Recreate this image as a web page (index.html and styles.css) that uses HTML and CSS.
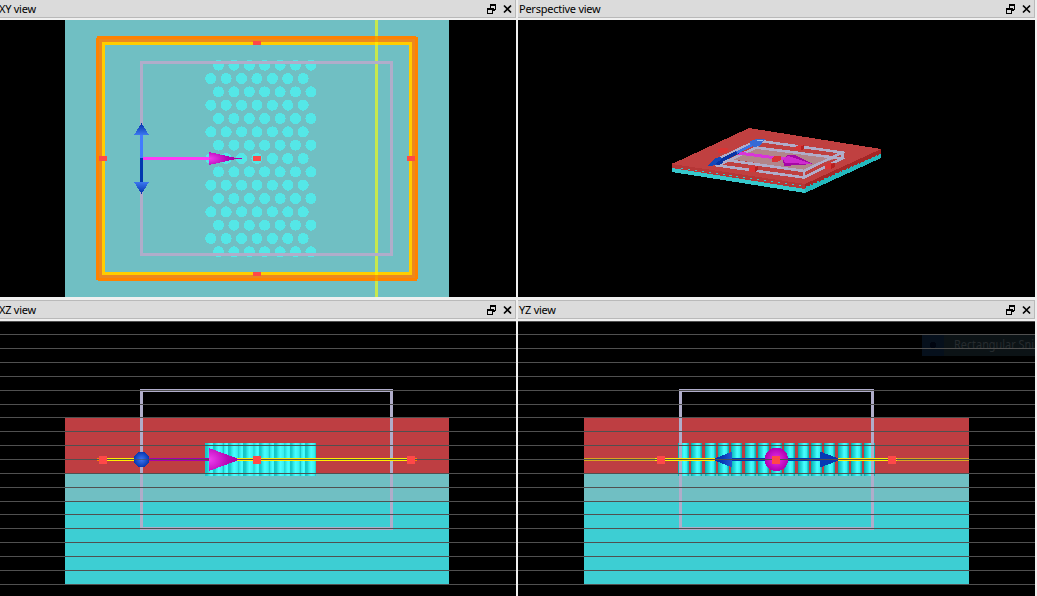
FILE: index.html
```
<!DOCTYPE html>
<html lang="en">
<head>
<meta charset="utf-8">
<title>Layout views</title>
<link rel="stylesheet" href="styles.css">
</head>
<body>
<svg class="defs" width="0" height="0">
  <defs>
    <symbol id="controls" viewBox="0 0 26 10">
      <path d="M3 0h6v6h-1v1H6v3H0V4h3zM4 2v2h3v1h1V2zM1 6v3h4V6z" fill="#000" fill-rule="evenodd"/>
      <path d="M17 1.500l7 7M24 1.500l-7 7" stroke="#000" stroke-width="1.700"/>
    </symbol>
    <linearGradient id="tube"><stop offset="0" stop-color="#0aa"/><stop offset=".14" stop-color="#16c4c4"/><stop offset=".35" stop-color="#28e0e0"/><stop offset=".55" stop-color="#48ffff"/><stop offset=".78" stop-color="#38f0f0"/><stop offset=".9" stop-color="#18c0c0"/><stop offset="1" stop-color="#0aa"/></linearGradient>
    <linearGradient id="softtube"><stop offset="0" stop-color="#14c4c4"/><stop offset=".2" stop-color="#18cccc"/><stop offset=".35" stop-color="#30e8e8"/><stop offset=".55" stop-color="#48ffff"/><stop offset=".85" stop-color="#38f0f0"/><stop offset="1" stop-color="#18c4c4"/></linearGradient>
    <radialGradient id="ball"><stop offset="0" stop-color="#3c74f4"/><stop offset="1" stop-color="#0638b0"/></radialGradient>
    <radialGradient id="pinkball"><stop offset="0" stop-color="#e830e8"/><stop offset="1" stop-color="#b000b0"/></radialGradient>
    <radialGradient id="cone" cx="0" cy=".5" r="1"><stop offset="0" stop-color="#f040f0"/><stop offset=".6" stop-color="#b808b8"/><stop offset="1" stop-color="#a000a0"/></radialGradient>
    <linearGradient id="blueup" x2="0" y2="1"><stop offset="0" stop-color="#0030a8"/><stop offset="1" stop-color="#3c78f0"/></linearGradient>
    <linearGradient id="bluedown" x2="0" y2="1"><stop offset="0" stop-color="#3c78f0"/><stop offset="1" stop-color="#0030a8"/></linearGradient>
    <linearGradient id="blueleft"><stop offset="0" stop-color="#0030a8"/><stop offset=".5" stop-color="#0838b4"/><stop offset="1" stop-color="#2458d0"/></linearGradient>
  </defs>
</svg>
<main class="views">
  <section class="view">
    <header class="bar"><h2 class="name">XY view</h2><svg class="controls"><use href="#controls"/></svg></header>
    <svg class="canvas" viewBox="0 20 516 277" shape-rendering="crispEdges">
      <path fill="#70bfc3" d="M65 20h384v277H65z"/>
      <g id="dots" fill="#54e7e7"></g>
      <rect x="141.5" y="62.5" width="250" height="192" fill="none" stroke="#b0adca" stroke-width="3"/>
      <rect x="100.5" y="40.5" width="313" height="236" fill="none" stroke="#eb8820" stroke-width="6"/>
      <rect x="97.5" y="37.5" width="319" height="242" fill="none" stroke="#ff8200" stroke-width="3"/>
      <rect x="103.5" y="43.5" width="307" height="230" fill="none" stroke="#ffcd00" stroke-width="3"/>
      <path fill="#70bfc3" d="M96 36h1v2h-1zM416 36h2v1h-2zM96 280h2v1h-2zM417 279h1v2h-1z"/>
      <path fill="#c6e84d" d="M375 20h3v277h-3z"/>
      <path fill="#ffe500" d="M375 42h3v3h-3zM375 272h3v3h-3z"/>
      <path fill="#f59b00" d="M375 36h3v6h-3zM375 275h3v6h-3z"/>
      <path fill="#b0adca" d="M375 253h3v3h-3zM375 61h3v3h-3z"/>
      <path fill="#427cff" d="M140 134h3v24h-3z"/><path fill="#0038b0" d="M140 158h3v25h-3z"/>
      <path fill="url(#blueup)" d="M141.5 123L149 135h-15z"/><path fill="url(#bluedown)" d="M134 182h15l-7.500 12z"/>
      <path fill="#ff3cf5" d="M143 157h66v3h-66z"/><path fill="#b000b0" d="M234 158h8v1h-8z"/>
      <path fill="url(#cone)" d="M209 152l29 6.500-29 6.500z"/>
      <path fill="#ff4848" d="M253 41h8v4h-8zM99 156h8v5h-8zM253 156h8v5h-8zM407 156h8v5h-8zM253 272h8v4h-8z"/>
    </svg>
  </section>
  <section class="view">
    <header class="bar"><h2 class="name">Perspective view</h2><svg class="controls"><use href="#controls"/></svg></header>
    <svg class="canvas" viewBox="518 20 517 277" shape-rendering="crispEdges">
      <path fill="#36c8cc" d="M672 167l133 19v7L672 172z"/>
      <path fill="#23b8bd" d="M805 186l76-33v5l-76 35z"/>
      <path fill="#b63636" d="M672 163l133 20v6L672 168z"/>
      <path fill="#a52626" d="M805 183l76-34v5l-76 34z"/>
      <path fill="#c04040" d="M672 164l77-36 132 21-76 35z"/>
      <path stroke="#36c8cc" stroke-dasharray="2 5" d="M681 168.500l124 18"/>
      <path stroke="#23b8bd" stroke-dasharray="2 2" d="M806 187l75-33"/>
      <path fill="#b2858a" d="M730 159l26-13 78 13-30 11z"/>
      <g fill="none" stroke="#b0adca" stroke-width="2.600">
        <path d="M757 140.500l85 12-38 18.500-86-12z"/>
        <path d="M756 147.500l86 11-38 19-86-12z"/>
        <path d="M804 171v7M842.500 152v7"/>
      </g>
      <path fill="#d93434" d="M718 149l4-1h6v3l-3 2h-7zM749 168l3-2h6v4l-3 2h-6zM795 147l4-2h5v4l-3 1h-6zM825 165l4-2h6v4l-4 2h-6z"/>
      <path fill="#b42020" d="M801 146l3-1v4l-3 1zM755 167l3-1v4l-3 2zM831 164l4-1v4l-4 2z"/>
      <path stroke="#d935d9" stroke-width="3" d="M738 153l47 6"/>
      <path fill="#d93434" d="M772 158l3-2h6v4l-4 2h-5z"/>
      <path stroke="#0734a5" stroke-width="4" d="M720 161l18-9"/><path stroke="#3b72e5" stroke-width="3" d="M737 152.500l18-9"/>
      <path fill="#1448b8" d="M707 166l8-8 6-1 2 5-4 3z"/><path fill="#0734a5" d="M715 164l7-5 1 4-4 2z"/>
      <path fill="#356ad5" d="M750 141l6-2h9l-5 7-6 1-4-3z"/>
      <path stroke="#9cc8f7" d="M757 140.500h6"/>
      <path fill="#a507a5" d="M783 159l5-4h7l18 9-29 2z"/><path fill="#cf2ccf" d="M783 159l5-3 25 8-28-1z"/>
    </svg>
  </section>
  <section class="view">
    <header class="bar"><h2 class="name">XZ view</h2><svg class="controls"><use href="#controls"/></svg></header>
    <svg class="canvas" viewBox="0 321 516 275" shape-rendering="crispEdges">
      <path fill="#be3e42" d="M65 417h384v56H65z"/><path fill="#70bfc3" d="M65 473h384v28H65z"/><path fill="#3dced3" d="M65 501h384v83H65z"/>
      <g id="xz-tubes"></g>
      <rect x="141.500" y="390.500" width="250" height="138" fill="none" stroke="#b0adca" stroke-width="3"/>
      <path fill="#ffee00" d="M107 458h300v3H107z"/><path fill="#ff8200" d="M97 458h10v3H97zM407 458h10v3h-10z"/>
      <path fill="#ab00ab" d="M149 458h60v3h-60z"/>
      <g class="grid"></g>
      <circle cx="141.500" cy="459.500" r="7.700" fill="url(#ball)"/>
      <path fill="url(#cone)" d="M209 448l31 11.500-31 11.500z"/>
      <path fill="#505050" opacity=".6" d="M134 459h15v1h-15z"/>
      <path fill="#ff4848" d="M99 456h8v8h-8zM253 456h8v8h-8zM407 456h8v8h-8z"/>
    </svg>
  </section>
  <section class="view">
    <header class="bar"><h2 class="name">YZ view</h2><svg class="controls"><use href="#controls"/></svg></header>
    <svg class="canvas" viewBox="518 321 517 275" shape-rendering="crispEdges">
      <path fill="#be3e42" d="M584 417h385v56H584z"/><path fill="#70bfc3" d="M584 473h385v28H584z"/><path fill="#3dced3" d="M584 501h385v83H584z"/>
      <path fill="#0c1316" d="M922 335h113v21H922z"/><path fill="#06101c" d="M922 335h22v21h-22z"/><circle cx="933" cy="345" r="3" fill="#000510"/>
      <text class="ghost" x="954" y="349" textLength="80" lengthAdjust="spacingAndGlyphs">Rectangular Sni</text>
      <g id="yz-tubes"></g>
      <rect x="680.500" y="390.500" width="192" height="138" fill="none" stroke="#b0adca" stroke-width="3"/>
      <path fill="#d9a520" d="M584 458h71v3h-71zM897 458h72v3h-72z"/><path fill="#fe0" d="M655 458h242v3H655z"/>
      <path fill="#0038b0" d="M732 458h88v3h-88z"/>
      <path fill="url(#blueleft)" d="M712 459.500l20-8v16z"/><path fill="#0639b4" d="M820 451.500l21 8-21 8z"/>
      <circle cx="776.500" cy="459.500" r="11.700" fill="url(#pinkball)"/>
      <g class="grid"></g>
      <path fill="#ff4848" d="M657 456h8v8h-8zM772 456h8v8h-8zM888 456h8v8h-8z"/>
    </svg>
  </section>
</main>
<script src="views.js"></script>
</body>
</html>
```
FILE: styles.css
```
body {
  margin: 0;
  background: #f0f0f0;
  overflow: hidden;
}
.defs { position: absolute; }
.views {
  display: grid;
  grid-template-columns: 516px 517px;
  grid-template-rows: 297px 296px;
  column-gap: 2px;
  row-gap: 3px;
  width: 1037px;
  height: 596px;
}
.view {
  display: flex;
  flex-direction: column;
  min-width: 0;
}
.bar {
  box-sizing: border-box;
  display: flex;
  align-items: center;
  justify-content: space-between;
  height: 18px;
  margin-bottom: 2px;
  padding: 0 2px 0 1px;
  background: #dbdbdb;
  border: 1px solid #b9b9b9;
  border-top: 0;
  border-left: 0;
}
.view:nth-child(n+3) .bar {
  height: 19px;
  border-top: 1px solid #b9b9b9;
}
.view:nth-child(odd) .bar { padding-left: 0; }
.name {
  margin: 0;
  font: 11px/17px "Noto Sans", sans-serif;
  letter-spacing: -0.25px;
  color: #000;
}
.view:nth-child(odd) .name { margin-left: -1px; }
.controls {
  width: 26px;
  height: 10px;
}
.canvas {
  display: block;
  width: 100%;
  flex: 1;
  min-height: 0;
  background: #000;
}
.ghost {
  font: 12px "Noto Sans", sans-serif;
  fill: #262b2e;
}
.grid { fill: #505050; }
```
FILE: views.js
```
const SVG = "http://www.w3.org/2000/svg";

function add(parent, tag, attrs) {
  const node = document.createElementNS(SVG, tag);
  for (const key in attrs) node.setAttribute(key, attrs[key]);
  parent.appendChild(node);
}

// staggered hole lattice
const dots = document.getElementById("dots");
for (let row = 0; row < 15; row++) {
  for (let col = 0; col < 7; col++) {
    add(dots, "circle", {
      cx: (row % 2 ? 210.8 : 218.5) + col * 15.4,
      cy: 65.2 + row * 13.33,
      r: 5.5
    });
  }
}

// side view of the holes: back row first, then front row
const xz = document.getElementById("xz-tubes");
for (const start of [205, 212.6]) {
  for (let col = 0; col < 7; col++) {
    add(xz, "rect", { x: start + col * 15.4, y: 443, width: 11, height: 33, fill: "url(#softtube)" });
  }
}
const yz = document.getElementById("yz-tubes");
for (let col = 0; col < 15; col++) {
  add(yz, "rect", { x: Math.round(678 + col * 13.3), y: 443, width: 11, height: 33, fill: "url(#tube)" });
}

// horizontal grid lines
const levels = [321, 334, 348, 362, 376, 390, 404, 417, 431, 445, 459, 473, 487, 501, 514, 528, 542, 556, 570, 584];
for (const grid of document.querySelectorAll(".grid")) {
  for (const y of levels) add(grid, "rect", { x: 0, y, width: 1035, height: 1 });
}
```
